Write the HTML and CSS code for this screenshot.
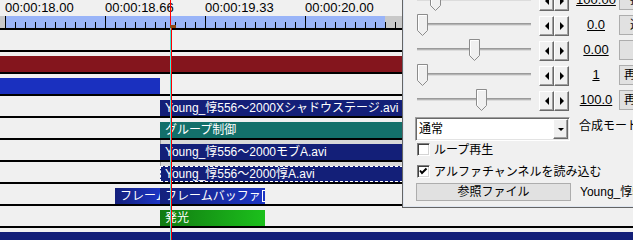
FILE: index.html
```html
<!DOCTYPE html>
<html lang="ja">
<head>
    <meta charset="UTF-8">
    <title>Timeline</title>
    <link rel="stylesheet" href="styles.css">
</head>
<body>
    <div class="timeline">
        <div class="ruler-labels">
            <span>00:00:18.00</span>
            <span>00:00:18.66</span>
            <span>00:00:19.33</span>
            <span>00:00:20.00</span>
        </div>
        <div class="ruler-bar"></div>

        <div class="layer"></div>
        <div class="layer">
            <div class="clip clip-red" style="left: 0; width: 640px;"></div>
        </div>
        <div class="layer">
            <div class="clip clip-blue" style="left: 0; width: 160px;"></div>
        </div>
        <div class="layer">
            <div class="clip clip-navy" style="left: 160px; width: 480px;">Young_惇556～2000Xシャドウステージ.avi</div>
        </div>
        <div class="layer">
            <div class="clip clip-teal" style="left: 160px; width: 480px;">グループ制御</div>
        </div>
        <div class="layer">
            <div class="scope"></div>
            <div class="clip clip-navy" style="left: 160px; width: 480px;">Young_惇556～2000モブA.avi</div>
        </div>
        <div class="layer">
            <div class="scope"></div>
            <div class="clip clip-navy selected" style="left: 160px; width: 243px;">Young_惇556～2000惇A.avi</div>
        </div>
        <div class="layer">
            <div class="clip clip-fade" style="left: 115px; width: 45px;">フレームバッファ</div>
            <div class="clip clip-fade clip-end" style="left: 160px; width: 105px;">フレームバッファ</div>
        </div>
        <div class="layer">
            <div class="clip clip-green" style="left: 160px; width: 105px;">発光</div>
        </div>
        <div class="layer">
            <div class="clip clip-navy" style="left: 0; width: 640px;"></div>
        </div>

        <div class="cursor"></div>
    </div>

    <div class="panel">
        <div class="param">
            <div class="slider">
                <div class="groove"></div>
                <svg class="thumb" style="left: 13px;" viewBox="0 0 11 22"><polygon points="0.5,0.5 10.5,0.5 10.5,16.5 5.5,21.5 0.5,16.5" fill="#f0f0f0" stroke="#8c8c8c"/><polyline points="1.5,16 1.5,1.5 9.5,1.5" fill="none" stroke="#fff"/></svg>
            </div>
            <div class="spin"><div class="spin-btn spin-left"></div><div class="spin-btn spin-right"></div></div>
            <span class="value">100.00</span>
            <div class="track-btn">拡大率</div>
        </div>
        <div class="param">
            <div class="slider">
                <div class="groove"></div>
                <svg class="thumb" style="left: 0;" viewBox="0 0 11 22"><polygon points="0.5,0.5 10.5,0.5 10.5,16.5 5.5,21.5 0.5,16.5" fill="#f0f0f0" stroke="#8c8c8c"/><polyline points="1.5,16 1.5,1.5 9.5,1.5" fill="none" stroke="#fff"/></svg>
            </div>
            <div class="spin"><div class="spin-btn spin-left"></div><div class="spin-btn spin-right"></div></div>
            <span class="value">0.0</span>
            <div class="track-btn">透明度</div>
        </div>
        <div class="param">
            <div class="slider">
                <div class="groove"></div>
                <svg class="thumb" style="left: 52px;" viewBox="0 0 11 22"><polygon points="0.5,0.5 10.5,0.5 10.5,16.5 5.5,21.5 0.5,16.5" fill="#f0f0f0" stroke="#8c8c8c"/><polyline points="1.5,16 1.5,1.5 9.5,1.5" fill="none" stroke="#fff"/></svg>
            </div>
            <div class="spin"><div class="spin-btn spin-left"></div><div class="spin-btn spin-right"></div></div>
            <span class="value">0.00</span>
            <div class="track-btn">回転</div>
        </div>
        <div class="param">
            <div class="slider">
                <div class="groove"></div>
                <svg class="thumb" style="left: 0;" viewBox="0 0 11 22"><polygon points="0.5,0.5 10.5,0.5 10.5,16.5 5.5,21.5 0.5,16.5" fill="#f0f0f0" stroke="#8c8c8c"/><polyline points="1.5,16 1.5,1.5 9.5,1.5" fill="none" stroke="#fff"/></svg>
            </div>
            <div class="spin"><div class="spin-btn spin-left"></div><div class="spin-btn spin-right"></div></div>
            <span class="value">1</span>
            <div class="track-btn">再生位置</div>
        </div>
        <div class="param">
            <div class="slider">
                <div class="groove"></div>
                <svg class="thumb" style="left: 59px;" viewBox="0 0 11 22"><polygon points="0.5,0.5 10.5,0.5 10.5,16.5 5.5,21.5 0.5,16.5" fill="#f0f0f0" stroke="#8c8c8c"/><polyline points="1.5,16 1.5,1.5 9.5,1.5" fill="none" stroke="#fff"/></svg>
            </div>
            <div class="spin"><div class="spin-btn spin-left"></div><div class="spin-btn spin-right"></div></div>
            <span class="value">100.0</span>
            <div class="track-btn">再生速度</div>
        </div>

        <div class="blend-row">
            <div class="combo"><span>通常</span><span class="combo-btn"></span></div>
            <span class="blend-label">合成モード</span>
        </div>
        <div class="check check-first"><span class="box"></span>ループ再生</div>
        <div class="check"><span class="box"><svg viewBox="0 0 11 11" width="11" height="11"><polyline points="2,4.5 4,7 8.5,2.5" fill="none" stroke="#000" stroke-width="2"/></svg></span>アルファチャンネルを読み込む</div>
        <div class="file-row">
            <div class="file-btn">参照ファイル</div>
            <span class="file-name">Young_惇556～2000惇A.avi</span>
        </div>
    </div>
</body>
</html>
```

FILE: styles.css
```css
body {
    margin: 0;
    width: 633px;
    height: 240px;
    overflow: hidden;
    position: relative;
    background: #f0f0f0;
    font-family: "Liberation Sans", "Noto Sans CJK JP", sans-serif;
}

.timeline {
    position: relative;
    height: 240px;
}

.ruler-labels {
    display: flex;
    height: 16px;
    padding-left: 5px;
    font-size: 13px;
    line-height: 16px;
    color: #000;
}
.ruler-labels span {
    flex: none;
    width: 100px;
}

.ruler-bar {
    height: 12px;
    background:
        linear-gradient(to right, #000 1px, transparent 1px) 5px 0 / 100px 100% repeat-x,
        linear-gradient(to right, #000 1px, transparent 1px) 5px 100% / 10px 6px repeat-x,
        linear-gradient(#99b4f8, #99b4f8) 5px 0 / 380px 100% no-repeat,
        #c8c8c8;
}

.layer {
    position: relative;
    height: 20px;
    border-top: 2px solid #000;
}

.clip {
    position: absolute;
    top: 4px;
    height: 16px;
    box-sizing: border-box;
    padding-left: 5px;
    color: #fff;
    font-size: 12px;
    line-height: 16px;
    white-space: nowrap;
    overflow: hidden;
}
.clip-red { background: #84151d; }
.clip-blue { background: #1a30bf; }
.clip-navy { background: #131f78; }
.clip-teal { background: #13706a; }
.clip-fade { background: linear-gradient(to right, #14207c, #1c35c4); }
.clip-green { background: linear-gradient(to right, #117a11, #1cc01c); }
.clip.selected {
    outline: 1px dashed #fff;
    outline-offset: -1px;
}
.clip-end::after {
    content: "";
    position: absolute;
    right: 0;
    top: 2px;
    bottom: 2px;
    width: 2px;
    border: 1px solid #fff;
    border-right: none;
}

.scope {
    position: absolute;
    top: 0;
    left: 160px;
    right: 0;
    height: 4px;
    background: #d8d8d8;
    border-left: 1px solid #a0a0a0;
}

.cursor {
    position: absolute;
    left: 170px;
    top: 0;
    width: 1px;
    height: 240px;
    background: linear-gradient(#ff0000 0 28px, #3ee6d6 28px);
    z-index: 1;
}
.cursor::before {
    content: "";
    position: absolute;
    left: 0;
    top: 25px;
    width: 6px;
    height: 3px;
    background: #8b4a14;
}
.cursor::after {
    content: "";
    position: absolute;
    left: 1px;
    top: 28px;
    bottom: 0;
    width: 1px;
    background: #ff0000;
}

.panel {
    position: absolute;
    left: 402px;
    top: -14px;
    width: 240px;
    height: 222px;
    box-sizing: border-box;
    padding-left: 14px;
    border: 1px solid #646464;
    background: #f0f0f0;
    box-shadow: inset 1px 0 #dfe6f0, inset 0 -1px #dfe6f0;
    font-size: 12px;
    color: #000;
    z-index: 2;
}

.param {
    display: flex;
    align-items: center;
    height: 25px;
}

.slider {
    position: relative;
    flex: none;
    width: 114px;
    height: 25px;
}
.groove {
    position: absolute;
    left: 0;
    right: 0;
    top: 11px;
    height: 3px;
    background: linear-gradient(#9a9a9a 0 1px, #b4b4b4 1px 2px, #dcdcdc 2px);
}
.thumb {
    position: absolute;
    top: 2px;
    width: 11px;
    height: 22px;
}

.spin {
    display: flex;
    flex: none;
    margin-left: 8px;
    margin-top: 3px;
}
.spin-btn {
    display: flex;
    align-items: center;
    justify-content: center;
    width: 15px;
    height: 20px;
    box-sizing: border-box;
    border: 1px solid;
    border-color: #fff #696969 #696969 #fff;
    box-shadow: inset -1px -1px #a0a0a0;
    background: #f0f0f0;
}
.spin-btn::before {
    content: "";
    border-top: 4px solid transparent;
    border-bottom: 4px solid transparent;
}
.spin-left::before { border-right: 4px solid #000; }
.spin-right::before { border-left: 4px solid #000; }

.value {
    flex: none;
    width: 50px;
    box-sizing: border-box;
    padding-left: 4px;
    text-align: center;
    font-size: 13px;
    line-height: 16px;
    text-decoration: underline;
}

.track-btn {
    flex: none;
    width: 58px;
    height: 20px;
    box-sizing: border-box;
    border: 1px solid #adadad;
    background: #e1e1e1;
    text-align: center;
    line-height: 18px;
    white-space: nowrap;
}

.blend-row {
    display: flex;
    align-items: flex-start;
    margin-top: 5px;
}
.combo {
    display: flex;
    align-items: center;
    justify-content: space-between;
    width: 155px;
    height: 24px;
    margin-left: -2px;
    box-sizing: border-box;
    padding-left: 3px;
    border: 1px solid;
    border-color: #a0a0a0 #fff #fff #a0a0a0;
    box-shadow: inset 1px 1px #696969, inset -1px -1px #e3e3e3;
    background: #fff;
    line-height: 16px;
}
.combo-btn {
    display: flex;
    align-items: center;
    justify-content: center;
    width: 15px;
    height: 20px;
    margin-right: 1px;
    box-sizing: border-box;
    border: 1px solid;
    border-color: #fff #696969 #696969 #fff;
    box-shadow: inset -1px -1px #a0a0a0;
    background: #f0f0f0;
}
.combo-btn::before {
    content: "";
    border-left: 3px solid transparent;
    border-right: 3px solid transparent;
    border-top: 3px solid #000;
}
.blend-label {
    margin-left: 9px;
    margin-top: 1px;
    line-height: 16px;
    white-space: nowrap;
}

.check {
    display: flex;
    align-items: center;
    height: 13px;
    margin-top: 9px;
    line-height: 14px;
    white-space: nowrap;
}
.check-first {
    margin-top: 2px;
}
.box {
    display: flex;
    align-items: center;
    justify-content: center;
    flex: none;
    width: 13px;
    height: 13px;
    margin-right: 4px;
    box-sizing: border-box;
    border: 1px solid;
    border-color: #808080 #fff #fff #808080;
    box-shadow: inset 1px 1px #404040, inset -1px -1px #d4d4d4;
    background: #fff;
}

.file-row {
    display: flex;
    align-items: center;
    margin-top: 5px;
}
.file-btn {
    flex: none;
    width: 155px;
    height: 18px;
    margin-left: -1px;
    box-sizing: border-box;
    border: 1px solid #adadad;
    background: #e1e1e1;
    text-align: center;
    line-height: 16px;
}
.file-name {
    margin-left: 9px;
    line-height: 16px;
    white-space: nowrap;
}
```
